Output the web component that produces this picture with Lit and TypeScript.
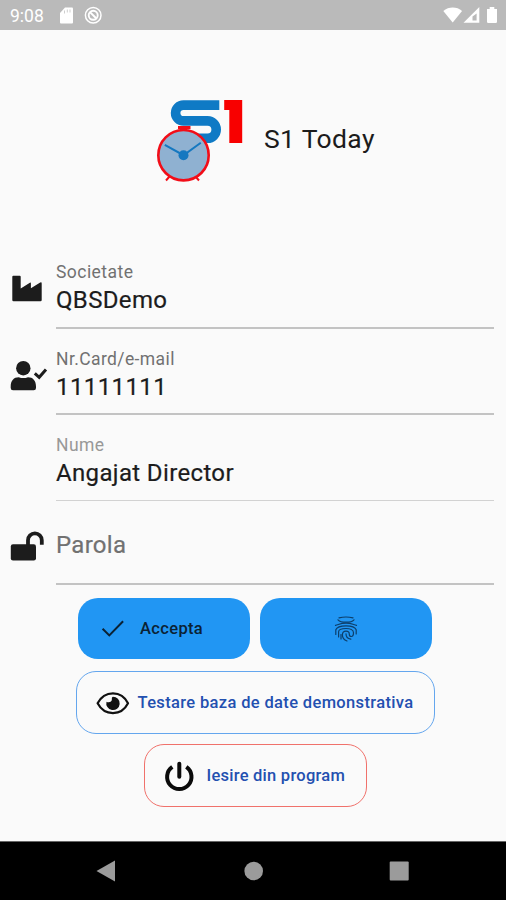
import { LitElement, html, css, svg, nothing, type TemplateResult } from "lit";
import { customElement } from "lit/decorators.js";
import { classMap } from "lit/directives/class-map.js";

interface Field {
  label: string;
  value?: string;
  icon?: TemplateResult;
  kind: string;
}

const factory = html`<svg width="56" height="40" viewBox="0 268 56 40">
  <path d="M12.300 276.800q0-1 1-1h6.400q1 0 1 1v11.600l9.200-5.600q1-.6 1 .6v4.800l9.300-5.600q1.500-.8 1.500.8v16.600q0 1.200-1.200 1.200H13.500q-1.200 0-1.200-1.200z" fill="#1c1c1c" />
</svg>`;

const userCheck = html`<svg width="56" height="40" viewBox="0 356 56 40">
  <circle cx="23.300" cy="368.200" r="7.200" fill="#1c1c1c" />
  <path d="M10.700 386.500c0-6 3.200-9.300 8-9.300 1.700.6 3 .9 4.600.9s3-.3 4.700-.9c4.800 0 8 3.300 8 9.300v1.400q0 2.300-2.300 2.300H13q-2.300 0-2.300-2.300z" fill="#1c1c1c" />
  <path d="M34.800 373.300l4.400 4 6.800-7.800" fill="none" stroke="#1c1c1c" stroke-width="3" />
</svg>`;

const lockOpen = html`<svg width="56" height="40" viewBox="0 526 56 40">
  <rect x="10.800" y="544.200" width="25.200" height="16.200" rx="2.200" fill="#1c1c1c" />
  <path d="M28 545v-4.700a6.900 6.900 0 0 1 13.800 0v4.500" fill="none" stroke="#1c1c1c" stroke-width="3.800" />
</svg>`;

const check = html`<svg width="24" height="20" viewBox="101 618 24 20">
  <path d="M102.600 627.800l6.700 6.600L123.100 620.300" fill="none" stroke="#0b2234" stroke-width="2" />
</svg>`;

const ridges = [
  "M5 1.800Q12 .2 19 1.800",
  "M4 3.800C7 7 17 7 20 3.800",
  "M1.500 9.300C4.500 8.800 6 7.200 12 7.200S19.500 8.800 22.500 9.300",
  "M1.800 18.500V13.800C2.800 11.200 7 9.900 12 9.900s9.200 1.300 10.200 3.900V18",
  "M4.600 21V15.800C4.600 13.500 8 12.500 12 12.500s7.500 1.200 7.500 4.300-1 3.700-2.200 3.700-2-1-2-2.300-.8-3-3.300-3-3.600 1.500-3.600 3.800c0 2.600 1.600 4.800 4.600 6",
  "M7 23V18.500",
  "M12 17.800c0 3 1.600 5 4.800 5.400",
];
const fingerprint = html`<svg width="24" height="26" viewBox="0 0 24 26">
  ${ridges.map((d) => svg`<path d=${d} fill="none" stroke="#0d3f6b" stroke-width="1.200" stroke-linecap="round" />`)}
</svg>`;

const eye = html`<svg width="34" height="24" viewBox="96 691 34 24">
  <path d="M97.600 703.300C104.500 690 121.500 690 128 703.300 121.500 716.300 104.500 716.300 97.600 703.300z" fill="none" stroke="#111" stroke-width="2.200" stroke-linejoin="round" />
  <path d="M112.900 696.700a6.700 6.700 0 1 1-6.400 5c2 1.400 5.600.4 5.400-2.600-.1-1-.2-1.700 1-2.400z" fill="#111" />
</svg>`;

const power = html`<svg width="32" height="32" viewBox="163 760 32 32">
  <path d="M172.300 766.900a12.200 12.200 0 1 0 14 0" fill="none" stroke="#0a0a0a" stroke-width="4" />
  <path d="M179.300 763.800v13" fill="none" stroke="#0a0a0a" stroke-width="4" stroke-linecap="round" />
</svg>`;

const logo = html`<svg width="90" height="84" viewBox="155 98 90 84">
  <path d="M219.300 105.100H183.500a7.900 7.900 0 0 0 0 15.800H207.500a8.700 8.700 0 0 1 0 17.400H190" fill="none" stroke="#0f7ac5" stroke-width="9.600" />
  <path d="M224.200 100H242.200V143H229.300V110H224.200z" fill="#f80000" />
  <path d="M178 127.500H190.500" fill="none" stroke="#f20d18" stroke-width="3" />
  <path d="M169.500 176.500L166 180.500M195.500 176.500L199 180.500" fill="none" stroke="#f20d18" stroke-width="2" />
  <circle cx="183.500" cy="155.200" r="25.200" fill="#8fb1d1" stroke="#f20d18" stroke-width="2.600" />
  <path d="M164.800 144.800L183.500 155.200 200.800 142.800" fill="none" stroke="#1578c0" stroke-width="2" />
  <circle cx="183.500" cy="155.300" r="5" fill="#1578c0" />
</svg>`;

const fields: Field[] = [
  { label: "Societate", value: "QBSDemo", icon: factory, kind: "company" },
  { label: "Nr.Card/e-mail", value: "11111111", icon: userCheck, kind: "card" },
  { label: "Nume", value: "Angajat Director", kind: "name" },
  { label: "Parola", icon: lockOpen, kind: "password" },
];

@customElement("status-bar")
class StatusBar extends LitElement {
  static styles = css`
    :host { display: flex; align-items: center; height: 30px; box-sizing: border-box; background: #bababa; color: #fff; padding: 0 7px 0 10px; }
    .time { font-size: 17.500px; line-height: 30px; width: 48px; padding-top: 1px; }
    .left { flex: 1; }
    svg { display: block; }
  `;
  render() {
    return html`
      <span class="time">9:08</span>
      <svg class="left" height="30" viewBox="58 0 380 30" preserveAspectRatio="xMinYMid meet">
        <path d="M65 7.500h7q1 0 1 1v14q0 1-1 1H61q-1 0-1-1V13z" fill="#fff" />
        <path d="M64.500 10.500v3M67.300 9.500v3M70 9.500v3" stroke="#cfcfcf" stroke-width="1" />
        <circle cx="93.200" cy="15.300" r="7.800" fill="none" stroke="#fff" stroke-width="1.500" />
        <circle cx="93.200" cy="15.300" r="4.500" fill="none" stroke="#fff" stroke-width="1.900" />
        <path d="M90 12.100l6.400 6.400" stroke="#fff" stroke-width="2" />
      </svg>
      <svg width="57" height="30" viewBox="442 0 57 30">
        <path d="M443.300 11c5.500-4.600 13.500-4.600 18.800 0l-9.400 11.500z" fill="#fff" />
        <path d="M479.300 7v15.800H463.500z" fill="#fff" />
        <path d="M476.600 13.500V20.500H472.500V16.500z" fill="#bababa" />
        <path d="M489.700 7h4.600v2h2.700v12.800q0 1.200-1.200 1.200h-7.600q-1.200 0-1.200-1.200V9h2.700z" fill="#fff" />
      </svg>
    `;
  }
}

@customElement("app-root")
class AppRoot extends LitElement {
  static styles = css`
    :host { display: flex; flex-direction: column; height: 900px; background: #fafafa; font-family: Roboto, sans-serif; color: #1c1c1c; overflow: hidden; }
    svg { display: block; flex: none; }
    .brand { display: flex; height: 232px; box-sizing: border-box; padding: 68px 0 0 155px; }
    .title { font-size: 26.500px; line-height: 32px; letter-spacing: 0.35px; margin: 25px 0 0 19px; font-weight: 400; }
    .field { display: grid; grid-template-columns: 56px 438px; box-sizing: border-box; height: 86px; }
    .company { height: 67px; }
    .company .icon { padding-top: 6px; }
    .card .icon { padding-top: 27px; }
    .password .icon { padding-top: 25px; }
    .password { height: 84px; }
    .input { display: flex; flex-direction: column; justify-content: flex-end; border-bottom: 2px solid #c3c3c3; white-space: nowrap; }
    .name .input { border-bottom: 1px solid #d2d2d2; }
    .label { font-size: 17.500px; line-height: 20px; letter-spacing: 0.45px; color: #717171; }
    .name .label { color: #989898; }
    .value { font-size: 24px; line-height: 28px; letter-spacing: 0.35px; margin: 4px 0 13px; -webkit-text-stroke: 0.2px currentColor; }
    .card .value { letter-spacing: 0.4px; margin-bottom: 12px; }
    .card .label { letter-spacing: 0.4px; }
    .password .label { font-size: 24px; line-height: 28px; letter-spacing: 0.3px; margin-bottom: 24px; -webkit-text-stroke: 0.2px currentColor; }
    .actions { flex: 1; display: flex; flex-direction: column; align-items: center; padding: 13px 0 0 4px; box-sizing: border-box; }
    .pair { display: flex; gap: 10px; margin-bottom: 12px; }
    .btn { display: flex; align-items: center; box-sizing: border-box; height: 61px; border: none; border-radius: 20px; background: none; font: 500 16.500px/20px Roboto, sans-serif; letter-spacing: 0.35px; white-space: nowrap; color: #2350b0; padding: 0; }
    .fill { width: 172px; background: #2196f3; color: #0b2234; }
    .accept { padding-left: 23px; gap: 15px; }
    .finger { justify-content: center; }
    .demo { width: 359px; height: 63px; border: 1px solid #64a6ee; padding-left: 19px; gap: 8px; margin-bottom: 10px; }
    .exit { width: 223px; height: 63px; border: 1px solid #f0716b; padding-left: 18px; gap: 12px; letter-spacing: 0.25px; }
    .nav { display: flex; align-items: center; height: 59px; box-sizing: border-box; background: #000; border-top: 1px solid #666; }
  `;
  render() {
    return html`
      <status-bar></status-bar>
      <header class="brand">${logo}<div class="title">S1 Today</div></header>
      <main>
        ${fields.map(
          (f) => html`<div class=${classMap({ field: true, [f.kind]: true })}>
            <div class="icon">${f.icon ?? nothing}</div>
            <div class="input">
              <span class="label">${f.label}</span>
              ${f.value ? html`<span class="value">${f.value}</span>` : nothing}
            </div>
          </div>`,
        )}
      </main>
      <section class="actions">
        <div class="pair">
          <button class="btn fill accept">${check}<span>Accepta</span></button>
          <button class="btn fill finger">${fingerprint}</button>
        </div>
        <button class="btn demo">${eye}<span>Testare baza de date demonstrativa</span></button>
        <button class="btn exit">${power}<span>Iesire din program</span></button>
      </section>
      <nav class="nav">
        <svg width="506" height="58" viewBox="0 842 506 58" fill="#9b9b9b">
          <path d="M96.500 871L115 860.500V881.500z" />
          <circle cx="253.700" cy="871" r="9.300" />
          <rect x="389.700" y="861.600" width="19" height="19" rx="1" />
        </svg>
      </nav>
    `;
  }
}
